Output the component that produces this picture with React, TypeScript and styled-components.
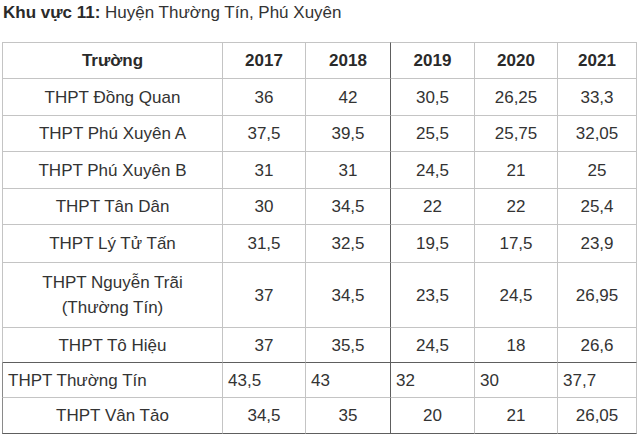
import React from 'react'
import styled, { createGlobalStyle } from 'styled-components'

const light = '#c4c4c4'
const dark = '#5e5e5e'

const GlobalStyle = createGlobalStyle`
  html, body {
    margin: 0;
    padding: 0;
    background: #fff;
  }
  body {
    font-family: "Liberation Sans", Arial, sans-serif;
    color: #333;
  }
`

type Row = {
  name: string
  values: string[]
  height: number
  left?: boolean
  darkTop?: boolean
}

const years = ['2017', '2018', '2019', '2020', '2021']
const widths = [221, 83, 85, 84, 83, 79]

const rows: Row[] = [
  { name: 'THPT Đồng Quan', values: ['36', '42', '30,5', '26,25', '33,3'], height: 37 },
  { name: 'THPT Phú Xuyên A', values: ['37,5', '39,5', '25,5', '25,75', '32,05'], height: 36 },
  { name: 'THPT Phú Xuyên B', values: ['31', '31', '24,5', '21', '25'], height: 37 },
  { name: 'THPT Tân Dân', values: ['30', '34,5', '22', '22', '25,4'], height: 36 },
  { name: 'THPT Lý Tử Tấn', values: ['31,5', '32,5', '19,5', '17,5', '23,9'], height: 38 },
  { name: 'THPT Nguyễn Trãi\n(Thường Tín)', values: ['37', '34,5', '23,5', '24,5', '26,95'], height: 65 },
  { name: 'THPT Tô Hiệu', values: ['37', '35,5', '24,5', '18', '26,6'], height: 35 },
  { name: 'THPT Thường Tín', values: ['43,5', '43', '32', '30', '37,7'], height: 35, left: true, darkTop: true },
  { name: 'THPT Vân Tảo', values: ['34,5', '35', '20', '21', '26,05'], height: 36 },
]

export default function App() {
  return (
    <Page>
      <GlobalStyle />
      <Heading>
        <strong>Khu vực 11:</strong> Huyện Thường Tín, Phú Xuyên
      </Heading>
      <Table>
        <colgroup>
          {widths.map((w, i) => (
            <col key={i} style={{ width: w }} />
          ))}
        </colgroup>
        <tbody>
          <TableRow $h={37}>
            <HeadCell $first $top>Trường</HeadCell>
            {years.map((y, i) => (
              <HeadCell key={y} $top $darkRight={i === 1}>
                {y}
              </HeadCell>
            ))}
          </TableRow>
          {rows.map((r, ri) => (
            <TableRow key={r.name} $h={r.height}>
              <Cell
                $first
                $left={r.left}
                $darkLeft={ri >= 7}
                $darkBottom={ri === 6 || ri === rows.length - 1}
              >
                {r.name}
              </Cell>
              {r.values.map((v, i) => (
                <Cell
                  key={i}
                  $left={r.left}
                  $darkRight={i === 1}
                  $darkBottom={ri === 6 || ri === rows.length - 1}
                >
                  {v}
                </Cell>
              ))}
            </TableRow>
          ))}
        </tbody>
      </Table>
    </Page>
  )
}

const Page = styled.div`
  padding: 1px 4px 0 2px;
`

const Heading = styled.div`
  font-size: 17px;
  line-height: 24px;
  padding-left: 1px;
  margin-bottom: 17px;
  color: #333;

  strong {
    font-weight: bold;
    color: #2a2a2a;
  }
`

const Table = styled.table`
  border-collapse: separate;
  border-spacing: 0;
  table-layout: fixed;
  width: 635px;
  font-size: 17px;
`

const TableRow = styled.tr<{ $h: number }>`
  height: ${(p) => p.$h}px;
`

type CellProps = {
  $first?: boolean
  $top?: boolean
  $left?: boolean
  $darkRight?: boolean
  $darkLeft?: boolean
  $darkBottom?: boolean
}

const Cell = styled.td<CellProps>`
  box-sizing: border-box;
  padding: 0 5px;
  text-align: ${(p) => (p.$left ? 'left' : 'center')};
  vertical-align: middle;
  line-height: 25px;
  white-space: pre-line;
  color: #333;
  border-right: 1px solid ${(p) => (p.$darkRight ? dark : light)};
  border-bottom: 1px solid ${(p) => (p.$darkBottom ? dark : light)};
  border-left: ${(p) => (p.$first ? `1px solid ${p.$darkLeft ? '#8a8a8a' : light}` : 'none')};
  border-top: ${(p) => (p.$top ? `1px solid ${light}` : 'none')};
`

const HeadCell = styled(Cell).attrs({ as: 'th' })`
  font-weight: bold;
  color: #2a2a2a;
`
